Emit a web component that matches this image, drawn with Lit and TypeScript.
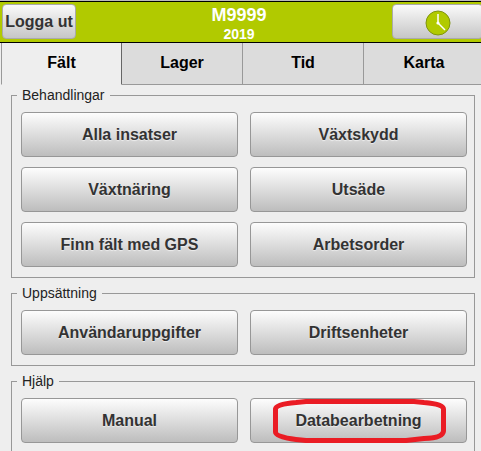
import { LitElement, html, css, svg, nothing } from "lit";
import { customElement, property, state } from "lit/decorators.js";
import { classMap } from "lit/directives/class-map.js";

const TABS = ["Fält", "Lager", "Tid", "Karta"];

interface Group {
  title: string;
  actions: string[];
}

const GROUPS: Group[] = [
  {
    title: "Behandlingar",
    actions: ["Alla insatser", "Växtskydd", "Växtnäring", "Utsäde", "Finn fält med GPS", "Arbetsorder"],
  },
  { title: "Uppsättning", actions: ["Användaruppgifter", "Driftsenheter"] },
  { title: "Hjälp", actions: ["Manual", "Databearbetning"] },
];

const HIGHLIGHTED = "Databearbetning";

@customElement("action-group")
export class ActionGroup extends LitElement {
  @property() heading = "";
  @property({ attribute: false }) actions: string[] = [];
  @property() highlighted = "";

  static styles = css`
    :host {
      display: block;
    }
    .group {
      min-width: 0;
      margin: 0;
      padding: 9px 7px 10px 9px;
      border: 1px solid #989898;
    }
    .heading {
      margin-left: -4px;
      padding: 0 5px;
      font-size: 14px;
      line-height: 16px;
      color: #222;
    }
    .grid {
      display: grid;
      grid-template-columns: 1fr 1fr;
      gap: 10px 12px;
    }
    .action {
      position: relative;
      height: 45px;
      padding: 0;
      border: 1px solid #979797;
      border-radius: 4px;
      background: linear-gradient(#fdfdfd, #bdbdbd);
      font: bold 16px/20px "Liberation Sans", Arial, sans-serif;
      color: #333;
      text-shadow: 0 1px 1px #eee;
      cursor: pointer;
    }
    .ring {
      position: absolute;
      inset: 0;
      margin: auto;
      width: 173px;
      height: 45px;
      overflow: visible;
      pointer-events: none;
    }
  `;

  private ring() {
    return html`<svg class="ring" viewBox="0 0 173 45" aria-hidden="true">
      ${svg`<path d="M24 4.5 L34 3.5 H142 L152 4.5 Q171.5 6 171.5 11 V33 Q171 40 152 40.5 L134 42.5 H34 L24 41.5 Q3.5 39 3.5 34 V11 Q4 6 24 4.5 Z"
        fill="none" stroke="#ea1c24" stroke-width="5" stroke-linejoin="round" />`}
    </svg>`;
  }

  render() {
    return html`<fieldset class="group">
      <legend class="heading">${this.heading}</legend>
      <div class="grid">
        ${this.actions.map(
          (label) => html`<button type="button" class="action">
            ${label}${label === this.highlighted ? this.ring() : nothing}
          </button>`
        )}
      </div>
    </fieldset>`;
  }
}

@customElement("app-root")
export class AppRoot extends LitElement {
  @state() private active = 0;

  static styles = css`
    :host {
      display: flex;
      flex-direction: column;
      height: 100vh;
      overflow: hidden;
      background: #eee;
      font-family: "Liberation Sans", Arial, sans-serif;
      color: #000;
    }
    .bar {
      flex: none;
      display: grid;
      grid-template-columns: 84px 1fr 91px;
      height: 40px;
      margin: 1px -2px 0 0;
      padding-left: 2px;
      border-top: 1px solid #000;
      border-bottom: 1px solid #000;
      background: #b1ca00;
      box-shadow: 0 -1px #bbb;
    }
    .tool {
      box-sizing: border-box;
      height: 35px;
      margin-top: 2px;
      padding: 0;
      border: 1px solid #aaa;
      border-radius: 4px;
      background: linear-gradient(#fafafa, #c6c6c6);
      font: bold 16px/20px "Liberation Sans", Arial, sans-serif;
      color: #333;
      cursor: pointer;
    }
    .logout {
      width: 74px;
    }
    .clock {
      display: flex;
      align-items: center;
      justify-content: center;
      padding-top: 2px;
    }
    .title {
      margin: 0;
      padding-top: 3px;
      text-align: center;
      color: #fff;
      font-size: 18px;
      line-height: 20px;
    }
    .year {
      display: block;
      font-size: 14px;
      line-height: 18px;
    }
    .tabs {
      flex: none;
      display: grid;
      grid-template-columns: repeat(4, 1fr);
      margin: 0 -4px 0 1px;
    }
    .tab {
      height: 42px;
      padding: 0 0 1px;
      border: solid #999;
      border-width: 0 1px 1px 0;
      background: #dcdcdc;
      font: bold 16px/20px "Liberation Sans", Arial, sans-serif;
      color: #000;
      cursor: pointer;
    }
    .tab:first-child {
      border-left-width: 1px;
    }
    .tab.active {
      border-right-color: #666;
      border-bottom-color: transparent;
      background: #eee;
    }
    .content {
      flex: 1;
      min-height: 0;
      display: flex;
      flex-direction: column;
      gap: 7px;
      padding: 2px 6px 0 11px;
      overflow-y: auto;
      scrollbar-width: none;
    }
  `;

  render() {
    return html`
      <header class="bar">
        <button type="button" class="tool logout">Logga ut</button>
        <h1 class="title">M9999<span class="year">2019</span></h1>
        <button type="button" class="tool clock" aria-label="Tid">
          <svg width="26" height="26" viewBox="0 0 26 26" aria-hidden="true">
            <circle cx="13" cy="13" r="12" fill="#b1ca00" stroke="#7f9410" />
            <path d="M13 4V13L20 20" fill="none" stroke="#fff" stroke-width="1.5" />
            <circle cx="13" cy="13" r="1.6" fill="#fff" />
          </svg>
        </button>
      </header>
      <nav class="tabs" role="tablist">
        ${TABS.map(
          (label, i) => html`<button
            type="button"
            role="tab"
            class=${classMap({ tab: true, active: i === this.active })}
            aria-selected=${i === this.active}
            @click=${() => (this.active = i)}
          >
            ${label}
          </button>`
        )}
      </nav>
      <main class="content">
        ${GROUPS.map(
          (g) => html`<action-group
            .heading=${g.title}
            .actions=${g.actions}
            .highlighted=${HIGHLIGHTED}
          ></action-group>`
        )}
      </main>
    `;
  }
}
